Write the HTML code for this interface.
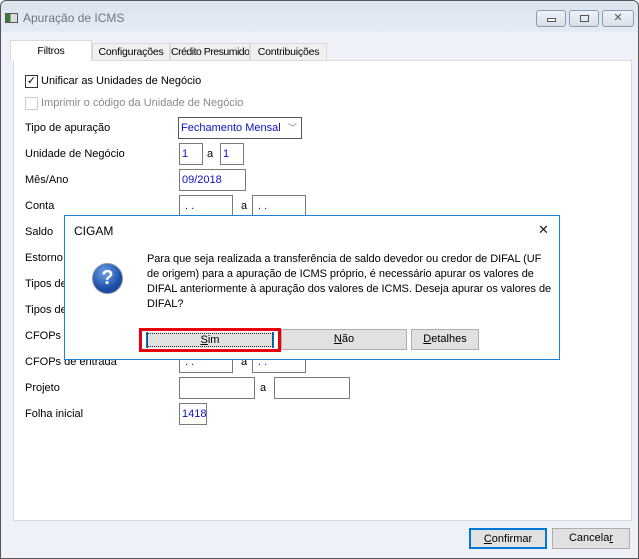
<!DOCTYPE html>
<html><head><meta charset="utf-8"><style>
*{box-sizing:border-box;margin:0;padding:0}
body{width:639px;height:559px;overflow:hidden;font-family:"Liberation Sans",sans-serif;font-size:11px;color:#000;background:#fff;position:relative}
.win{position:absolute;left:0;top:0;width:639px;height:559px;border:1px solid #555;border-radius:6px 6px 0 0;background:#eef1f8}
.title{position:absolute;left:0;top:0;width:637px;height:31px;background:linear-gradient(#dbe4ef,#e4ebf4);border-radius:6px 6px 0 0}
.title .t{position:absolute;left:22px;top:10px;color:#6d7580;font-size:12px}
.ic{position:absolute;left:4px;top:12px;width:13px;height:10px;border:1px solid #555;background:linear-gradient(90deg,#3a7a3a 40%,#ddd 40%)}
.wb{position:absolute;top:9px;height:17px;border:1px solid #8a9cb0;border-radius:3px;background:linear-gradient(#eef3f9,#d7e0ea)}
.a{position:absolute;white-space:nowrap}
.panel{position:absolute;left:12px;top:59px;width:619px;height:461px;background:#fff;border:1px solid #d9d9d9}
.tab{position:absolute;top:42px;height:18px;background:#f0f0f0;border:1px solid #d9d9d9;text-align:center;line-height:16px;font-size:10.5px;letter-spacing:-0.2px;white-space:nowrap;overflow:hidden}
.in{position:absolute;border:1px solid #7a7a7a;background:#fff;color:#1010c0;padding-left:2px;line-height:20px;height:22px;white-space:nowrap;overflow:hidden}
.btn{position:absolute;height:21px;border:1px solid #adadad;background:#e1e1e1;text-align:center;line-height:19px}
u{text-decoration:underline}
</style></head><body>
<div class="win">
 <div class="title"><div class="ic"></div><div class="t">Apuração de ICMS</div>
  <div class="wb" style="left:535px;width:30px"><div style="position:absolute;left:10px;top:7px;width:9px;height:4px;border:1px solid #555;background:#fff"></div></div>
  <div class="wb" style="left:568px;width:30px"><div style="position:absolute;left:10px;top:4px;width:9px;height:7px;border:1px solid #555"></div></div>
  <div class="wb" style="left:601px;width:32px;text-align:center;line-height:14px;font-size:11px;color:#555">✕</div>
 </div>
 <div class="panel"></div>
 <div class="tab" style="left:9px;top:39px;width:82px;height:21px;background:#fff;border-bottom:none;line-height:20px">Filtros</div>
 <div class="tab" style="left:91px;width:78px">Configurações</div>
 <div class="tab" style="left:169px;width:80px;letter-spacing:-0.5px">Crédito Presumido</div>
 <div class="tab" style="left:249px;width:77px">Contribuições</div>

 <div class="a" style="left:24px;top:74px;width:13px;height:13px;border:1px solid #333;font-size:11px;line-height:11px;text-align:center">✓</div>
 <div class="a" style="left:40px;top:74px">Unificar as Unidades de Negócio</div>
 <div class="a" style="left:24px;top:96px;width:13px;height:13px;border:1px solid #ccc"></div>
 <div class="a" style="left:40px;top:96px;color:#8a8a8a">Imprimir o código da Unidade de Negócio</div>

 <div class="a" style="left:24px;top:121px">Tipo de apuração</div>
 <div class="in" style="left:177px;top:116px;width:124px;border-color:#555">Fechamento Mensal<span style="position:absolute;right:4px;top:0;color:#777;font-size:9px">﹀</span></div>
 <div class="a" style="left:24px;top:147px">Unidade de Negócio</div>
 <div class="in" style="left:178px;top:142px;width:24px">1</div><div class="a" style="left:206px;top:147px">a</div>
 <div class="in" style="left:219px;top:142px;width:24px">1</div>
 <div class="a" style="left:24px;top:173px">Mês/Ano</div>
 <div class="in" style="left:178px;top:168px;width:67px">09/2018</div>
 <div class="a" style="left:24px;top:199px">Conta</div>
 <div class="in" style="left:178px;top:194px;width:54px">&nbsp;. .</div><div class="a" style="left:240px;top:199px">a</div>
 <div class="in" style="left:251px;top:194px;width:54px">&nbsp;. .</div>
 <div class="a" style="left:24px;top:225px">Saldo</div>
 <div class="a" style="left:24px;top:251px">Estorno</div>
 <div class="a" style="left:24px;top:277px">Tipos de</div>
 <div class="a" style="left:24px;top:303px">Tipos de</div>
 <div class="a" style="left:24px;top:329px">CFOPs d</div>
 <div class="a" style="left:24px;top:355px">CFOPs de entrada</div>
 <div class="in" style="left:178px;top:350px;width:54px">&nbsp;. .</div><div class="a" style="left:240px;top:355px">a</div>
 <div class="in" style="left:251px;top:350px;width:54px">&nbsp;. .</div>
 <div class="a" style="left:24px;top:381px">Projeto</div>
 <div class="in" style="left:178px;top:376px;width:76px"></div><div class="a" style="left:259px;top:381px">a</div>
 <div class="in" style="left:273px;top:376px;width:76px"></div>
 <div class="a" style="left:24px;top:407px">Folha inicial</div>
 <div class="in" style="left:178px;top:402px;width:28px">1418</div>

 <div class="btn" style="left:468px;top:527px;width:78px;border:2px solid #0078d7;line-height:18px"><u>C</u>onfirmar</div>
 <div class="btn" style="left:551px;top:527px;width:78px">Cancela<u>r</u></div>
</div>

<div style="position:absolute;left:64px;top:215px;width:496px;height:145px;background:#fff;border:1px solid #1883d7">
 <div class="a" style="left:9px;top:8px;font-size:12px">CIGAM</div>
 <div class="a" style="left:473px;top:6px;font-size:13px;color:#222">✕</div>
 <div style="position:absolute;left:27px;top:47px;width:31px;height:31px;border-radius:50%;background:radial-gradient(circle at 40% 30%,#6fa2e8,#1d4fa8 60%,#143a80);border:1px solid #8a9ab0;color:#fff;font-weight:bold;font-size:20px;text-align:center;line-height:29px">?</div>
 <div class="a" style="left:82px;top:36px;line-height:15px;font-size:11px;white-space:normal;width:405px;letter-spacing:-0.05px">Para que seja realizada a transferência de saldo devedor ou credor de DIFAL (UF de origem) para a apuração de ICMS próprio, é necessário apurar os valores de DIFAL anteriormente à apuração dos valores de ICMS. Deseja apurar os valores de DIFAL?</div>
 <div class="btn" style="left:216px;top:113px;width:126px;height:21px"><u>N</u>ão</div>
 <div class="btn" style="left:346px;top:113px;width:68px;height:21px"><u>D</u>etalhes</div>
 <div style="position:absolute;left:74px;top:112px;width:142px;height:24px;border:3px solid #e8000a;background:#fff">
  <div style="position:absolute;left:4px;top:1px;width:128px;height:16px;background:#e1e1e1;border-left:2px solid #0078d7;border-right:2px solid #0078d7;outline:1px dotted #333;outline-offset:-2px;text-align:center;line-height:16px"><u>S</u>im</div>
 </div>
</div>
</body></html>
